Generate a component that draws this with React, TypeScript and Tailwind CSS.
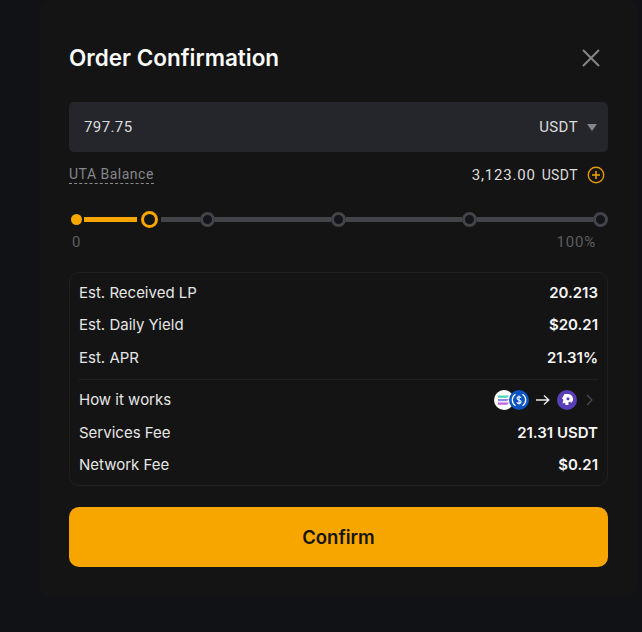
import React from "react";

function TokenIcons() {
  return (
    <div className="flex items-center">
      <svg width="35" height="20" viewBox="0 0 35 20">
        <circle cx="10" cy="10" r="10" fill="#ffffff" />
        <path d="M4 5.500h11l-2 2.200H4z" fill="#4fd0b8" />
        <path d="M4 9h11l-2 2.200H4z" fill="#8f8ce8" />
        <path d="M4 12.500h11l-2 2.200H4z" fill="#c65fe0" />
        <circle cx="25" cy="10" r="10" fill="#0b53bf" />
        <path d="M21.500 4.300a6.700 6.700 0 0 0 0 11.400M28.500 4.300a6.700 6.700 0 0 1 0 11.400" fill="none" stroke="#fff" strokeWidth="1.300" />
        <path d="M27 7.800c-.4-.8-1.100-1.100-2-1.100-1.200 0-2 .6-2 1.600 0 2.200 4.100 1.200 4.100 3.400 0 1-.9 1.700-2.100 1.700-1 0-1.800-.4-2.200-1.200M25 5.500v9" fill="none" stroke="#fff" strokeWidth="1.100" />
      </svg>
      <svg width="14" height="12" viewBox="0 0 14 12" className="ml-[7px]">
        <path d="M0 6h13M8 1.500 12.800 6 8 10.500" fill="none" stroke="#e8e8e8" strokeWidth="1.400" />
      </svg>
      <svg width="20" height="20" viewBox="0 0 20 20" className="ml-[7px]">
        <circle cx="10" cy="10" r="10" fill="#5a3fb8" />
        <path d="M7.500 4h3c3.500 0 5.500 2.200 5.500 5.200 0 1.800-.9 3-2.200 3.800l-.3-1.600-2.200 1 .2 2.600H8.500l-.5-2.200-2.500.7.900-3.800-1.400-1.100z" fill="#ffffff" />
        <circle cx="11" cy="8.800" r="1.500" fill="#5a3fb8" />
      </svg>
      <svg width="7" height="12" viewBox="0 0 7 12" className="ml-[9px] mr-[5px]">
        <path d="M1 1l5 5-5 5" fill="none" stroke="#4a4c50" strokeWidth="1.200" />
      </svg>
    </div>
  );
}

function Row({ label, children }: { label: string; children: React.ReactNode }) {
  return (
    <div className="flex h-[32.5px] items-center justify-between pt-[1px]">
      <span className="text-[15px] text-[#e6e6e6]">{label}</span>
      {children}
    </div>
  );
}

function Value({ children }: { children: React.ReactNode }) {
  return <span className="text-[15px] font-semibold text-[#f5f5f5]">{children}</span>;
}

function Stop() {
  return <div className="h-[15px] w-[15px] shrink-0 rounded-full border-[3px] border-[#42444a] bg-[#141518]" />;
}

export default function App() {
  return (
    <div className="h-[632px] w-[642px] overflow-hidden bg-[#101215] font-['Inter',sans-serif]">
      <div className="ml-[40px] h-[597px] w-[597px] rounded-[10px] bg-[#141414] pl-[29px] pr-[29px] pt-[41px]">
        <div className="flex h-[34px] items-center justify-between">
          <h1 className="text-[22.5px] font-semibold text-[#fbfbfb]">Order Confirmation</h1>
          <svg width="18" height="18" viewBox="0 0 18 18" className="mr-[8px]">
            <path d="M1 1l16 16M17 1 1 17" stroke="#84868a" strokeWidth="2" />
          </svg>
        </div>

        <div className="mt-[27px] flex h-[50px] w-[539px] items-center justify-between rounded-[5px] bg-[#24262b] pl-[15px] pr-[11px] font-['Roboto',sans-serif] text-[15px] tracking-[0.4px] text-[#dcdcdc]">
          <span>797.75</span>
          <div className="flex items-center gap-[9px]">
            <span>USDT</span>
            <svg width="10" height="7" viewBox="0 0 10 7">
              <path d="M0 0h10L5 7z" fill="#84868a" />
            </svg>
          </div>
        </div>

        <div className="mt-[12px] flex h-[22px] w-[539px] items-center justify-between">
          <span className="border-b border-dashed border-[#8a8c90] font-['Roboto',sans-serif] text-[14px] leading-[17px] tracking-[0.5px] text-[#85878b]">
            UTA Balance
          </span>
          <div className="flex items-center font-['Roboto',sans-serif] text-[15px] tracking-[0.8px] text-[#dcdcdc]">
            <span>3,123.00</span>
            <span className="ml-[6px] text-[14px] tracking-[0.4px]">USDT</span>
            <svg width="18" height="18" viewBox="0 0 18 18" className="ml-[9px] mr-[3px]">
              <circle cx="9" cy="9" r="7.700" fill="none" stroke="#e09a0a" strokeWidth="1.400" />
              <path d="M5 9h8M9 5v8" stroke="#f0a500" strokeWidth="1.500" />
            </svg>
          </div>
        </div>

        {/* slider */}
        <div className="mt-[24px] flex h-[18px] w-[539px] items-center">
          <div className="ml-[2px] h-[11px] w-[11px] rounded-full bg-[#f7a600]" />
          <div className="ml-[2px] h-[5px] w-[53px] bg-[#f7a600]" />
          <div className="ml-[4px] h-[17px] w-[17px] rounded-full border-[3.500px] border-[#f7a600] bg-[#141518]" />
          <div className="ml-[3px] h-[5px] w-[39px] bg-[#42444a]" />
          <Stop />
          <div className="h-[5px] w-[116.5px] bg-[#42444a]" />
          <Stop />
          <div className="h-[5px] w-[116.5px] bg-[#42444a]" />
          <Stop />
          <div className="h-[5px] w-[116px] bg-[#42444a]" />
          <Stop />
        </div>
        <div className="mt-[6px] flex w-[527px] justify-between pl-[3px] font-['Roboto',sans-serif] text-[15px] leading-[17px] tracking-[0.8px] text-[#5c5e63]">
          <span>0</span>
          <span>100%</span>
        </div>

        <div className="mt-[21px] w-[539px] rounded-[10px] border border-[#1e2024] px-[9px] pb-[4px] pt-[3px]">
          <Row label="Est. Received LP">
            <Value>20.213</Value>
          </Row>
          <Row label="Est. Daily Yield">
            <Value>$20.21</Value>
          </Row>
          <Row label="Est. APR">
            <Value>21.31%</Value>
          </Row>
          <div className="mb-[3.500px] mt-[5.500px] h-px bg-[#1e2024]" />
          <Row label="How it works">
            <TokenIcons />
          </Row>
          <Row label="Services Fee">
            <Value>21.31 USDT</Value>
          </Row>
          <Row label="Network Fee">
            <Value>$0.21</Value>
          </Row>
        </div>

        <button className="mt-[21px] flex h-[60px] w-[539px] items-center justify-center rounded-[10px] bg-[#f7a600] pt-[1px] text-[18.500px] font-semibold text-[#141414]">
          Confirm
        </button>
      </div>
    </div>
  );
}
